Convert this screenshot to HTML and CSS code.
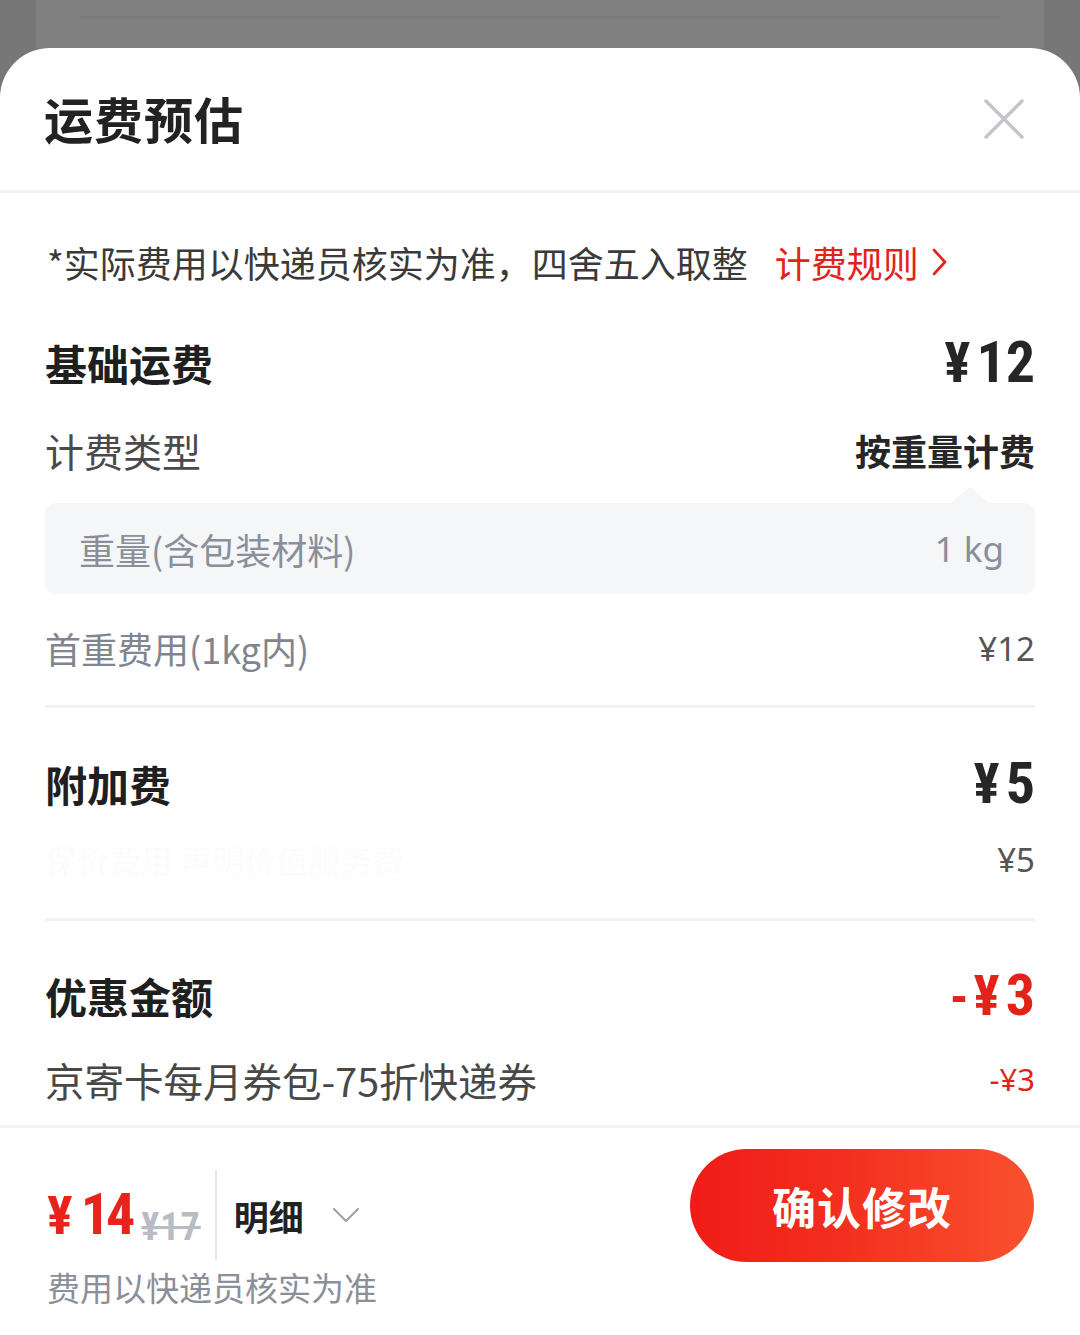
FILE: index.html
```html
<!DOCTYPE html>
<html lang="zh-CN">
<head>
<meta charset="utf-8">
<title>运费预估</title>
<link rel="stylesheet" href="styles.css">
</head>
<body>
<div class="backdrop">
  <div class="backdrop-card"><div class="backdrop-line"></div></div>
</div>
<div class="sheet">
  <header class="sheet-header">
    <h1 class="title">运费预估</h1>
    <svg class="close" width="40" height="40" viewBox="0 0 40 40" aria-label="关闭">
      <path d="M2 2L38 38M38 2L2 38" fill="none" stroke="#c3c5cb" stroke-width="3.5" stroke-linecap="round"/>
    </svg>
  </header>

  <main class="content">
    <div class="notice">
      <span class="notice-text">*实际费用以快递员核实为准，四舍五入取整</span>
      <span class="rule-link">计费规则
        <svg class="chev-right" width="16" height="28" viewBox="0 0 16 28"><path d="M2 2L13 14L2 26" fill="none" stroke="#e2231a" stroke-width="2.6" stroke-linecap="round" stroke-linejoin="round"/></svg>
      </span>
    </div>

    <div class="row sec-row sec-first">
      <span class="sec-title">基础运费</span>
      <span class="amount"><span class="yen">¥</span>12</span>
    </div>
    <div class="row type-row">
      <span class="label-dark">计费类型</span>
      <span class="value-bold">按重量计费</span>
    </div>
    <div class="weight-box">
      <span>重量(含包装材料)</span>
      <span class="weight-val">1 kg</span>
    </div>
    <div class="row detail-row">
      <span class="label-gray">首重费用(1kg内)</span>
      <span class="small-amount">¥12</span>
    </div>
    <div class="divider div-first"></div>

    <div class="row sec-row sec-extra">
      <span class="sec-title">附加费</span>
      <span class="amount"><span class="yen">¥</span>5</span>
    </div>
    <div class="row detail-row extra-detail">
      <span class="label-ghost">保价费用 声明价值服务费</span>
      <span class="small-amount">¥5</span>
    </div>
    <div class="divider div-second"></div>

    <div class="row sec-row sec-discount">
      <span class="sec-title">优惠金额</span>
      <span class="amount red"><span class="minus">-</span><span class="yen">¥</span>3</span>
    </div>
    <div class="row detail-row coupon-row">
      <span class="label-coupon">京寄卡每月券包-75折快递券</span>
      <span class="small-amount red">-¥3</span>
    </div>
  </main>

  <footer class="footer">
    <div class="footer-left">
      <div class="price-line">
        <div class="price">
          <span class="price-yen">¥</span><span class="price-num">14</span>
          <span class="price-old">¥17</span>
        </div>
        <div class="vline"></div>
        <div class="detail-toggle">
          <span>明细</span>
          <svg class="chev-down" width="28" height="16" viewBox="0 0 28 16"><path d="M2 2L14 14L26 2" fill="none" stroke="#a0a3a9" stroke-width="2.2" stroke-linecap="round" stroke-linejoin="round"/></svg>
        </div>
      </div>
      <div class="footer-note">费用以快递员核实为准</div>
    </div>
    <button class="confirm" type="button">确认修改</button>
  </footer>
</div>
</body>
</html>
```

FILE: styles.css
```css
* { box-sizing: border-box; }
html, body { margin: 0; padding: 0; }
body {
  width: 1080px;
  height: 1335px;
  overflow: hidden;
  background: #777777;
  font-family: "Noto Sans CJK SC", "Noto Sans", sans-serif;
  color: #262626;
}

.backdrop {
  height: 48px;
  padding: 0 36px;
}
.backdrop-card {
  height: 48px;
  background: #808080;
  padding: 16px 44px 0;
}
.backdrop-line {
  height: 2px;
  background: #7a7a7a;
}

.sheet {
  background: #ffffff;
  border-radius: 50px 50px 0 0;
  height: 1287px;
  display: flex;
  flex-direction: column;
}

.sheet-header {
  height: 145px;
  border-bottom: 3px solid #f2f2f2;
  display: flex;
  align-items: center;
  justify-content: space-between;
  padding: 0 56px 4px 44px;
}
.title {
  margin: 0;
  font-size: 49px;
  font-weight: 700;
  color: #222222;
  letter-spacing: 1px;
  line-height: 1;
}
.close { display: block; margin-top: 4px; }

.content {
  padding: 0 45px;
  flex: 1;
}

.notice {
  height: 142px;
  display: flex;
  align-items: center;
  font-size: 36px;
  padding-left: 2px;
  padding-bottom: 4px;
}
.notice-text { color: #3a3a3a; }
.rule-link {
  color: #e2231a;
  margin-left: 27px;
  display: flex;
  align-items: center;
  gap: 13px;
}
.chev-right { display: block; }

.row {
  display: flex;
  align-items: center;
  justify-content: space-between;
  height: 60px;
}
.sec-row { height: 54px; }
.sec-first { margin-top: 0; }
.sec-extra { margin-top: 48px; }
.sec-discount { margin-top: 47px; }

.sec-title {
  font-size: 42px;
  font-weight: 700;
  color: #1f1f1f;
}
.amount {
  font-family: "Liberation Sans Narrow", "Roboto Condensed", Roboto, sans-serif;
  font-weight: 700;
  font-size: 58px;
  line-height: 1;
  color: #262626;
  display: flex;
  align-items: baseline;
}
.amount .yen {
  font-size: 55px;
  margin-right: 6px;
}
.amount .minus {
  font-size: 52px;
  margin-right: 5px;
}
.red { color: #e2231a !important; }

.type-row { margin-top: 31px; }
.label-dark {
  font-size: 39px;
  color: #4a4a4a;
}
.value-bold {
  font-size: 36px;
  font-weight: 700;
  color: #262626;
}

.weight-box {
  position: relative;
  margin-top: 23px;
  height: 91px;
  background: #f5f6f8;
  border-radius: 10px;
  display: flex;
  align-items: center;
  justify-content: space-between;
  padding: 0 31px 0 34px;
  font-size: 36px;
  color: #8a8f99;
}
.weight-box::before {
  content: "";
  position: absolute;
  top: -16px;
  right: 46px;
  border-left: 19px solid transparent;
  border-right: 19px solid transparent;
  border-bottom: 16px solid #f5f6f8;
}
.weight-val { font-family: "Noto Sans", sans-serif; font-size: 35px; }

.detail-row { margin-top: 24px; }
.label-gray {
  font-size: 36px;
  color: #80858f;
}
.small-amount {
  font-family: "Noto Sans", sans-serif;
  font-size: 33px;
  color: #555555;
}

.divider {
  height: 3px;
  background: #f2f2f2;
}
.div-first { margin-top: 27px; }
.extra-detail { margin-top: 19px; }
.label-ghost {
  font-size: 32px;
  color: #fcfcfc;
}
.div-second { margin-top: 29px; }

.coupon-row { margin-top: 27px; }
.label-coupon {
  font-size: 39.5px;
  color: #484848;
}
.coupon-row .small-amount { font-size: 31px; }

.footer {
  height: 210px;
  border-top: 3px solid #f2f2f2;
  display: flex;
  justify-content: space-between;
  align-items: flex-start;
  padding: 0 46px 0 47px;
}
.footer-left {
  margin-top: 42px;
  display: flex;
  flex-direction: column;
}
.price-line {
  height: 90px;
  display: flex;
  align-items: center;
}
.price {
  display: flex;
  align-items: baseline;
  color: #e8231c;
  font-weight: 700;
  font-family: "Liberation Sans Narrow", "Roboto Condensed", Roboto, sans-serif;
}
.price-yen {
  font-size: 54px;
  margin-right: 8px;
}
.price-num {
  font-size: 58px;
  line-height: 1;
  letter-spacing: -4px;
}
.price-old {
  font-size: 38px;
  color: #b9bcc3;
  font-weight: 700;
  text-decoration: line-through;
  margin-left: 10px;
  letter-spacing: 1px;
  position: relative;
  top: 6px;
}
.vline {
  width: 2px;
  height: 90px;
  background: #e6e6e6;
  margin: 0 17px 0 14px;
}
.detail-toggle {
  display: flex;
  align-items: center;
  gap: 28px;
  font-size: 35px;
  font-weight: 700;
  color: #222222;
}
.chev-down { display: block; }
.footer-note {
  margin-top: 7px;
  font-size: 33px;
  line-height: 40px;
  color: #8a8f99;
}

.confirm {
  margin-top: 21px;
  width: 344px;
  height: 113px;
  border: 0;
  border-radius: 57px;
  background: linear-gradient(90deg, #f01b18 0%, #f3301f 45%, #f9512f 100%);
  color: #ffffff;
  font-family: "Noto Sans CJK SC", sans-serif;
  font-size: 44px;
  font-weight: 700;
  letter-spacing: 1px;
  padding: 0;
}
```
